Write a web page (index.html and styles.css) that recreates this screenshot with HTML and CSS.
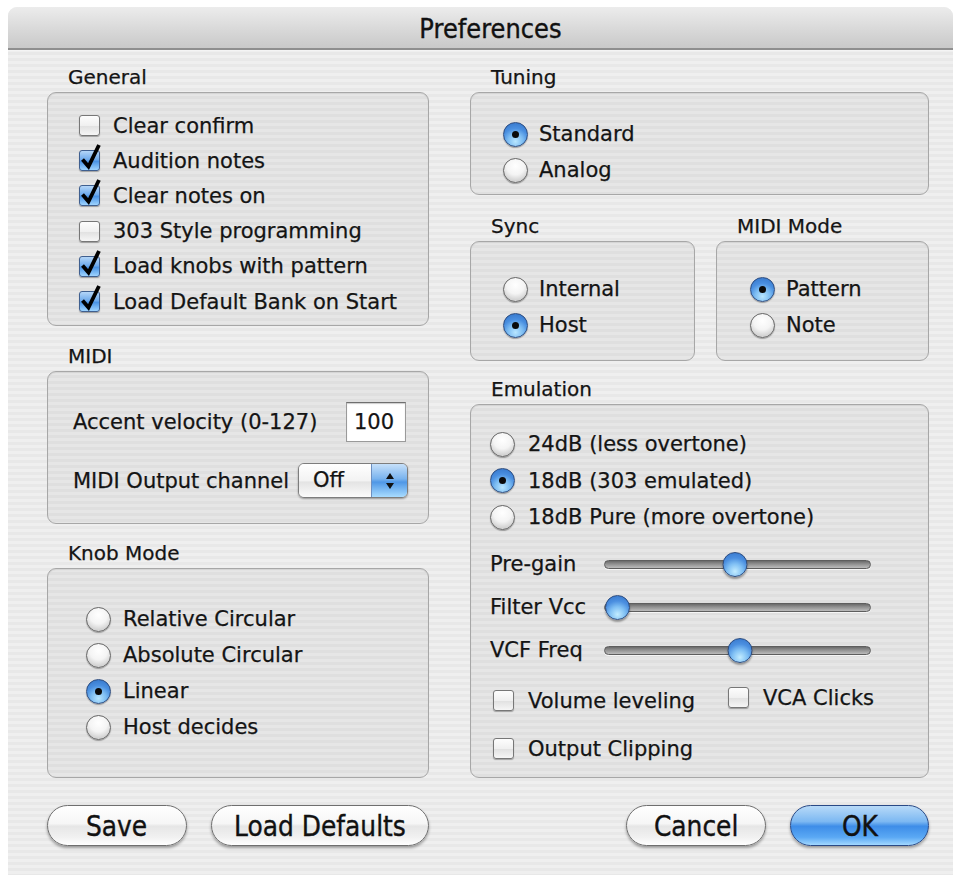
FILE: index.html
```html
<!DOCTYPE html>
<html lang="en">
<head>
<meta charset="utf-8">
<title>Preferences</title>
<link rel="stylesheet" href="styles.css">
</head>
<body>
<div class="window">
  <div class="titlebar"><span class="title">Preferences</span></div>
  <div class="content">
    <div class="col">
      <section class="group">
        <h2 class="label">General</h2>
        <div class="box box-general">
          <label class="opt"><span class="check"></span>Clear confirm</label>
          <label class="opt"><span class="check on"><svg viewBox="0 0 21 21"><path d="M3.5 9.5 L9.5 16.5 L20 -5"/></svg></span>Audition notes</label>
          <label class="opt"><span class="check on"><svg viewBox="0 0 21 21"><path d="M3.5 9.5 L9.5 16.5 L20 -5"/></svg></span>Clear notes on</label>
          <label class="opt"><span class="check"></span>303 Style programming</label>
          <label class="opt"><span class="check on"><svg viewBox="0 0 21 21"><path d="M3.5 9.5 L9.5 16.5 L20 -5"/></svg></span>Load knobs with pattern</label>
          <label class="opt"><span class="check on"><svg viewBox="0 0 21 21"><path d="M3.5 9.5 L9.5 16.5 L20 -5"/></svg></span>Load Default Bank on Start</label>
        </div>
      </section>
      <section class="group g-midi">
        <h2 class="label">MIDI</h2>
        <div class="box box-midi">
          <div class="field field-accent">
            <span>Accent velocity (0-127)</span>
            <span class="textbox">100</span>
          </div>
          <div class="field field-channel">
            <span>MIDI Output channel</span>
            <span class="popup"><span class="popup-value">Off</span><span class="popup-arrows"><i class="up"></i><i class="down"></i></span></span>
          </div>
        </div>
      </section>
      <section class="group g-knob">
        <h2 class="label">Knob Mode</h2>
        <div class="box box-knob">
          <label class="opt radio-row"><span class="radio"></span>Relative Circular</label>
          <label class="opt radio-row"><span class="radio"></span>Absolute Circular</label>
          <label class="opt radio-row"><span class="radio on"></span>Linear</label>
          <label class="opt radio-row"><span class="radio"></span>Host decides</label>
        </div>
      </section>
    </div>

    <div class="col">
      <section class="group">
        <h2 class="label">Tuning</h2>
        <div class="box box-tuning">
          <label class="opt radio-row"><span class="radio on"></span>Standard</label>
          <label class="opt radio-row"><span class="radio"></span>Analog</label>
        </div>
      </section>
      <div class="pair">
        <section class="group g-sync">
          <h2 class="label">Sync</h2>
          <div class="box box-sync">
            <label class="opt radio-row"><span class="radio"></span>Internal</label>
            <label class="opt radio-row"><span class="radio on"></span>Host</label>
          </div>
        </section>
        <section class="group g-mode">
          <h2 class="label">MIDI Mode</h2>
          <div class="box box-mode">
            <label class="opt radio-row"><span class="radio on"></span>Pattern</label>
            <label class="opt radio-row"><span class="radio"></span>Note</label>
          </div>
        </section>
      </div>
      <section class="group g-emu">
        <h2 class="label">Emulation</h2>
        <div class="box box-emu">
          <label class="opt emu-radio"><span class="radio"></span>24dB (less overtone)</label>
          <label class="opt emu-radio"><span class="radio on"></span>18dB (303 emulated)</label>
          <label class="opt emu-radio"><span class="radio"></span>18dB Pure (more overtone)</label>
          <div class="sliders">
            <div class="slider-row"><span class="slider-label">Pre-gain</span><span class="track"><span class="thumb" style="left:49%"></span></span></div>
            <div class="slider-row"><span class="slider-label">Filter Vcc</span><span class="track"><span class="thumb thumb-min" style="left:0%"></span></span></div>
            <div class="slider-row"><span class="slider-label">VCF Freq</span><span class="track"><span class="thumb" style="left:51%"></span></span></div>
          </div>
          <div class="emu-checks">
            <label class="opt emu-check wide"><span class="check"></span>Volume leveling</label>
            <label class="opt emu-check vca"><span class="check"></span>VCA Clicks</label>
            <label class="opt emu-check full"><span class="check"></span>Output Clipping</label>
          </div>
        </div>
      </section>
    </div>
  </div>
  <div class="buttons">
    <button class="btn btn-save"><span>Save</span></button>
    <button class="btn btn-load"><span>Load Defaults</span></button>
    <span class="spacer"></span>
    <button class="btn btn-cancel"><span>Cancel</span></button>
    <button class="btn btn-ok"><span>OK</span></button>
  </div>
</div>
</body>
</html>
```

FILE: styles.css
```css
* { box-sizing: border-box; }

html, body {
  margin: 0;
  padding: 0;
  background: #ffffff;
}

body {
  font-family: "DejaVu Sans", "Noto Sans", sans-serif;
  color: #141414;
  -webkit-text-stroke: 0.25px #141414;
}

.window {
  position: relative;
  margin: 7px 5px 0 8px;
  width: 945px;
  height: 868px;
  border-radius: 9px 9px 0 0;
  background: repeating-linear-gradient(to bottom, #efefef 0 3px, #e8e8e8 3px 6px);
}

/* dark screen corner peeking behind the rounded window edge */
.window::before {
  content: "";
  position: absolute;
  left: 0;
  top: 0;
  width: 10px;
  height: 10px;
  background: #000;
  z-index: -1;
}

.titlebar {
  height: 43px;
  border-radius: 9px 9px 0 0;
  background: linear-gradient(to bottom, #ececec 0%, #dcdcdc 45%, #c9c9c9 100%);
  border-bottom: 2px solid #8f8f8f;
  display: flex;
  align-items: center;
  justify-content: center;
  box-shadow: 0 1px 0 #f4f4f4;
}

.title {
  display: inline-block;
  font-size: 26px;
  color: #111;
  -webkit-text-stroke: 0.4px #111;
  transform: scaleX(0.93);
  margin-left: 19px;
  margin-top: 2px;
}

.content {
  display: grid;
  grid-template-columns: 382px 459px;
  column-gap: 41px;
  padding: 15px 0 0 39px;
}

.col {
  display: flex;
  flex-direction: column;
}

.group {
  display: flex;
  flex-direction: column;
}

.label {
  margin: 0 0 3px 0;
  padding-left: 21px;
  font-size: 20px;
  font-weight: normal;
  height: 24px;
  line-height: 24px;
}

.box {
  border: 1px solid #a7a7a7;
  border-radius: 9px;
  background: repeating-linear-gradient(to bottom, #e6e6e6 0 3px, #dfdfdf 3px 6px);
  box-shadow: inset 0 1px 1px rgba(0, 0, 0, 0.08);
}

.opt {
  display: flex;
  align-items: center;
  font-size: 21px;
}

/* ---------- checkboxes ---------- */
.check {
  position: relative;
  flex: none;
  width: 21px;
  height: 21px;
  border: 1px solid #777;
  border-radius: 3px;
  background: linear-gradient(to bottom, #fdfdfd 0%, #f0f0f0 50%, #e2e2e2 55%, #f6f6f6 100%);
  box-shadow: 0 1px 1px rgba(0, 0, 0, 0.3);
  margin-right: 13px;
  -webkit-text-stroke: 0;
}

.check.on {
  border-color: #3f5f8f;
  background: linear-gradient(to bottom, #b4d6f8 0%, #6eaaec 45%, #4a93e4 55%, #9ed4ff 100%);
}

.check svg {
  position: absolute;
  left: -1px;
  top: -1px;
  width: 21px;
  height: 21px;
  overflow: visible;
}

.check svg path {
  fill: none;
  stroke: #000;
  stroke-width: 3.8;
  stroke-linejoin: miter;
}

/* ---------- radios ---------- */
.radio {
  position: relative;
  flex: none;
  width: 25px;
  height: 25px;
  border-radius: 50%;
  border: 1px solid #666;
  background: radial-gradient(circle at 50% 30%, #ffffff 0%, #f4f4f4 45%, #d3d3d3 75%, #f2f2f2 100%);
  box-shadow: 0 1px 1px rgba(0, 0, 0, 0.3);
  margin-right: 11px;
}

.radio.on {
  border-color: #2c4c80;
  background: radial-gradient(circle at 50% 80%, #b8e6ff 0%, #7cbcf2 35%, #4a8fe0 60%, #2f6fc4 100%);
}

.radio.on::after {
  content: "";
  position: absolute;
  left: 50%;
  top: 50%;
  width: 7px;
  height: 7px;
  margin: -3.5px 0 0 -3.5px;
  border-radius: 50%;
  background: #0a0a0a;
}

/* ---------- left column ---------- */
.box-general {
  height: 234px;
  padding: 15px 0 0 31px;
}

.box-general .opt {
  height: 35.2px;
}

.g-midi { margin-top: 18px; }

.box-midi {
  height: 153px;
  padding: 30px 0 0 25px;
}

.field {
  display: flex;
  align-items: center;
  justify-content: space-between;
  font-size: 21px;
}

.field-accent {
  height: 40px;
  padding-right: 22px;
}

.field-channel {
  height: 35px;
  margin-top: 21px;
  padding-right: 20px;
}

.textbox {
  width: 60px;
  height: 40px;
  background: #fff;
  border: 1px solid #9a9a9a;
  border-top-color: #6f6f6f;
  box-shadow: inset 0 1px 1px rgba(0, 0, 0, 0.2);
  padding: 6px 0 0 7px;
  font-size: 21px;
  line-height: 26px;
}

.popup {
  display: flex;
  width: 110px;
  height: 35px;
  border: 1px solid #7d7d7d;
  border-radius: 6px;
  box-shadow: 0 1px 2px rgba(0, 0, 0, 0.35);
  overflow: hidden;
}

.popup-value {
  flex: 1;
  padding-left: 14px;
  line-height: 33px;
  background: linear-gradient(to bottom, #ffffff 0%, #f3f3f3 50%, #e4e4e4 55%, #fbfbfb 100%);
}

.popup-arrows {
  position: relative;
  width: 36px;
  border-left: 1px solid #6d8fc0;
  background: linear-gradient(to bottom, #c6e0fa 0%, #79b3ee 45%, #4f97e6 55%, #a8dcff 100%);
}

.popup-arrows i {
  position: absolute;
  left: 14px;
  width: 0;
  height: 0;
  border-left: 4px solid transparent;
  border-right: 4px solid transparent;
}

.popup-arrows .up {
  top: 9px;
  border-bottom: 6px solid #111;
}

.popup-arrows .down {
  top: 19px;
  border-top: 6px solid #111;
}

.g-knob { margin-top: 17px; }

.box-knob {
  height: 210px;
  padding: 32px 0 0 38px;
}

.box-knob .opt {
  height: 36px;
}

.box-knob .radio { margin-right: 12px; }

/* ---------- right column ---------- */
.box-tuning {
  height: 103px;
  padding: 23px 0 0 32px;
}

.radio-row {
  height: 36px;
}

.pair {
  display: flex;
  gap: 21px;
  margin-top: 19px;
}

.g-sync { width: 225px; }
.g-mode { width: 213px; }

.box-sync,
.box-mode {
  height: 120px;
  padding: 29px 0 0 32px;
}

.box-mode { padding-left: 33px; }

.g-emu { margin-top: 16px; }

.box-emu {
  height: 374px;
  padding: 21px 0 0 19px;
}

.emu-radio {
  height: 36.5px;
}

.emu-radio .radio { margin-right: 13px; }

.sliders {
  margin-top: 7px;
}

.slider-row {
  display: flex;
  align-items: center;
  height: 43px;
  font-size: 21px;
}

.slider-label {
  width: 114px;
  flex: none;
}

.track {
  position: relative;
  width: 267px;
  height: 9px;
  border-radius: 5px;
  border: 1px solid #5e5e5e;
  background: linear-gradient(to bottom, #6a6a6a 0%, #8e8e8e 40%, #bcbcbc 100%);
  box-shadow: 0 1px 0 rgba(255, 255, 255, 0.7);
}

.thumb {
  position: absolute;
  top: 50%;
  width: 25px;
  height: 25px;
  margin: -12.5px 0 0 0;
  transform: translateX(-50%);
  border-radius: 50%;
  border: 1px solid #2c4c80;
  background: radial-gradient(circle at 50% 80%, #c2ecff 0%, #80c0f4 35%, #4b8fe0 62%, #3272c8 100%);
  box-shadow: 0 2px 2px rgba(0, 0, 0, 0.35);
}

.thumb.thumb-min {
  transform: none;
}

.emu-checks {
  display: flex;
  flex-wrap: wrap;
  margin-top: 11px;
  padding-left: 3px;
}

.emu-check {
  height: 36px;
}

.emu-check .check { margin-right: 14px; }

.emu-check.wide {
  width: 235px;
}

.emu-check.vca {
  width: 180px;
  margin-top: -3px;
}

.emu-check.full {
  width: 100%;
  margin-top: 12px;
}

/* ---------- buttons ---------- */
.buttons {
  display: flex;
  align-items: center;
  margin: 27px 0 0 39px;
  width: 882px;
}

.spacer { flex: 1; }

.btn {
  height: 41px;
  border-radius: 21px;
  border: 1px solid #6f6f6f;
  background: linear-gradient(to bottom, #ffffff 0%, #f6f6f6 45%, #e6e6e6 52%, #f1f1f1 80%, #ffffff 100%);
  box-shadow: 0 2px 3px rgba(0, 0, 0, 0.35);
  font-family: "DejaVu Sans", "Noto Sans", sans-serif;
  font-size: 29px;
  line-height: 36px;
  color: #111;
  -webkit-text-stroke: 0.4px #111;
  padding: 0;
}

.btn span {
  display: inline-block;
  transform: scaleX(0.86);
}

.btn-save { width: 140px; }
.btn-load { width: 218px; margin-left: 24px; }
.btn-cancel { width: 140px; margin-right: 24px; }

.btn-ok {
  width: 139px;
  border-color: #2a4a86;
  background: linear-gradient(to bottom, #b8daf8 0%, #7cb8f2 40%, #3e8de8 52%, #5aa8f4 80%, #a2d8ff 100%);
}
```
